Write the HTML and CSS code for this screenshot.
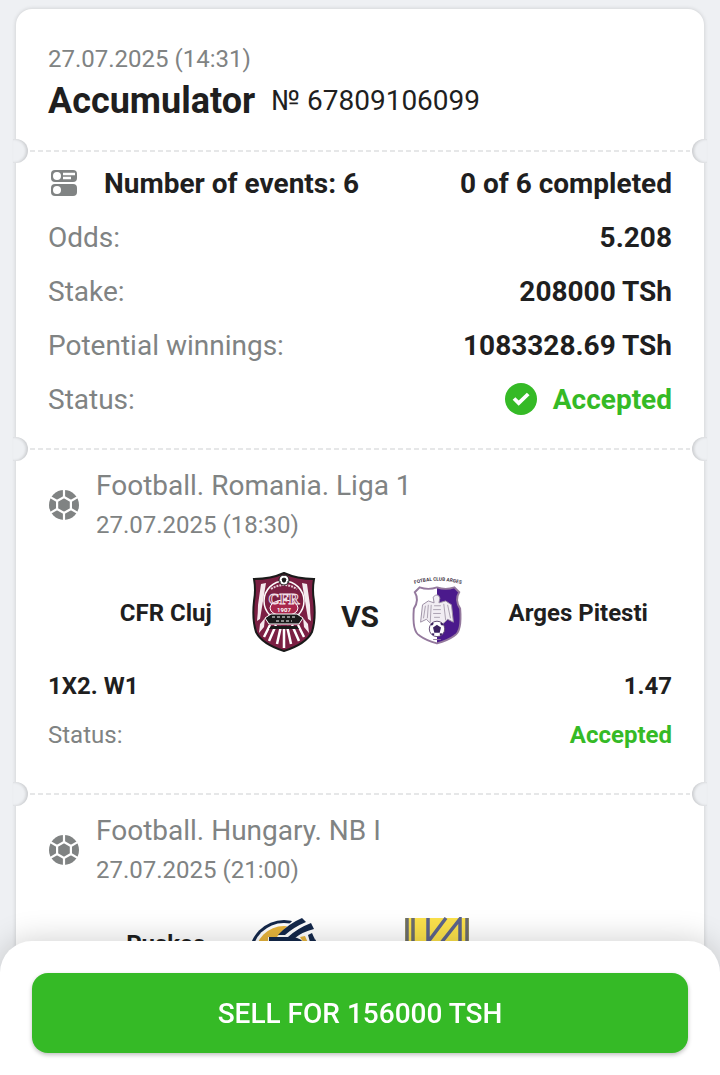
FILE: index.html
```html
<!DOCTYPE html>
<html lang="en">
<head>
    <meta charset="UTF-8">
    <meta name="viewport" content="width=device-width, initial-scale=1.0">
    <title>Accumulator № 67809106099</title>
    <link rel="stylesheet" href="styles.css">
</head>
<body>
    <!-- shared icons -->
    <svg class="sprite" aria-hidden="true">
        <symbol id="ball" viewBox="0 0 32 32">
            <circle cx="16" cy="16" r="15" fill="#808383"/>
            <g stroke="#fff" stroke-width="2.200" fill="none">
                <path d="M16 8V0M16 24v8M22.900 12l8-4.600M22.900 20l8 4.600M9.100 12l-8-4.600M9.100 20l-8 4.600"/>
                <path d="M16 8l6.900 4v8L16 24l-6.900-4v-8z"/>
            </g>
        </symbol>
    </svg>

    <main class="ticket">
        <header class="section ticket-header">
            <time class="date">27.07.2025 (14:31)</time>
            <div class="title-row">
                <h1>Accumulator</h1>
                <span class="number">№ 67809106099</span>
            </div>
        </header>

        <section class="section summary">
            <div class="row strong">
                <svg class="icon" viewBox="0 0 32 32" aria-hidden="true">
                    <rect x="3" y="3" width="26" height="12" rx="4" fill="#808383"/>
                    <rect x="3" y="17" width="26" height="12" rx="4" fill="#808383"/>
                    <circle cx="9" cy="9" r="4" fill="#fff"/>
                    <circle cx="9" cy="23" r="4" fill="#fff"/>
                    <path d="M15 7h12M15 11h8" stroke="#fff" stroke-width="2.400"/>
                </svg>
                <span class="events">Number of events: 6</span>
                <span class="value">0 of 6 completed</span>
            </div>
            <div class="row">
                <span>Odds:</span>
                <span class="value">5.208</span>
            </div>
            <div class="row">
                <span>Stake:</span>
                <span class="value">208000 TSh</span>
            </div>
            <div class="row">
                <span>Potential winnings:</span>
                <span class="value">1083328.69 TSh</span>
            </div>
            <div class="row">
                <span>Status:</span>
                <span class="value accepted">
                    <svg class="check" viewBox="0 0 32 32" aria-hidden="true">
                        <circle cx="16" cy="16" r="16" fill="#35ba26"/>
                        <path d="M9 15.500l4.700 4.700 9.500-9.200" fill="none" stroke="#fff" stroke-width="3.800"/>
                    </svg>
                    Accepted
                </span>
            </div>
        </section>

        <section class="section event">
            <div class="event-head">
                <svg class="icon" aria-hidden="true"><use href="#ball"/></svg>
                <div>
                    <h2>Football. Romania. Liga 1</h2>
                    <time class="date">27.07.2025 (18:30)</time>
                </div>
            </div>
            <div class="teams">
                <span class="team home">CFR Cluj</span>
                <svg class="crest" viewBox="0 0 64 82" aria-hidden="true">
                    <path d="M2 7Q19 7 32 1q13 6 30 6-2 11 0 22 2 18-2 31-6 12-28 19Q10 72 4 60 0 47 2 29 4 18 2 7z" fill="#7b1f43" stroke="#1a1a1a" stroke-width="2"/>
                    <path d="M9 12l5-1-4 24-2 12-3 2q1-9 1-16zM55 12l-5-1 4 24 2 12 3 2q-1-9-1-16zM8 52l5-6-1 9-5 6zM56 52l-5-6 1 9 5 6z" fill="#f5e9ee"/>
                    <path d="M18 53l-6 12M24 53l-7 16M29 54l-4 18M32 54v22M35 54l4 18M40 53l7 16M46 53l6 12" stroke="#fff" stroke-width="2.500"/>
                    <circle cx="32" cy="29" r="20" fill="#7b1f43" stroke="#fff" stroke-width="1.500"/>
                    <path d="M19 17q13-8 26 0" fill="none" stroke="#e9cdd8" stroke-width="2" stroke-dasharray="2 1"/>
                    <ellipse cx="32" cy="36" rx="14" ry="8" fill="#a8274c" stroke="#fff"/>
                    <text x="32" y="32" class="crest-cfr">CFR</text>
                    <text x="32" y="40" class="crest-year">1907</text>
                    <path d="M13 46l6-4h26l6 4-4 6H17z" fill="#1a1a1a" stroke="#fff"/>
                    <path d="M20 45h24M24 49h16" stroke="#fff" stroke-dasharray="3 2"/>
                    <path d="M19 54h26l2 3H17z" fill="#1a1a1a"/>
                    <circle cx="32" cy="8" r="5" fill="#fff" stroke="#1a1a1a"/>
                    <path d="M32 6l2 1-1 3h-2l-1-3zM28 10h1M35 10h1M32 3v1" fill="#1a1a1a" stroke="#1a1a1a"/>
                </svg>
                <span class="vs">VS</span>
                <svg class="crest" viewBox="-1 3 66 85" aria-hidden="true">
                    <path id="arc" d="M7 16Q32 8 59 16" fill="none"/>
                    <text class="crest-arc"><textPath href="#arc" startOffset="50%">FOTBAL CLUB ARGES</textPath></text>
                    <path d="M14 19q9 3 18 0 9 3 18 0l5 5q-5 8 1 17 2 24-6 28-7 5-18 8-11-3-18-8-8-4-6-28 6-9 1-17z" fill="#fff"/>
                    <path d="M32 19q9 3 18 0l5 5q-5 8 1 17 2 24-6 28-7 5-18 8z" fill="#4b1a8c"/>
                    <path d="M14 19q9 3 18 0 9 3 18 0l5 5q-5 8 1 17 2 24-6 28-7 5-18 8-11-3-18-8-8-4-6-28 6-9 1-17z" fill="none" stroke="#94799d" stroke-width="2"/>
                    <path d="M28 29q5-5 7 1l-1 5 7-2 6 4 2 18-6-3-4 4-4 1h-6l-4-1-4-4-6 3 2-18 6-4 6 2z" fill="#f1edf3" stroke="#9b8fa3"/>
                    <path d="M20 38l-2 13M23 37l-1 14M26 37l-1 18M39 36l2 17M43 37l3 14M29 38h7M28 42h8M28 46h8M29 50h6" fill="none" stroke="#aaa0b0"/>
                    <circle cx="32" cy="62" r="8" fill="#fff" stroke="#604a72"/>
                    <path d="M32 59l3 2-1 4h-4l-1-4zM26 58l2-2M36 56l2 2M27 67l2 1M35 68l2-1" fill="#3c2360" stroke="#3c2360" stroke-width="2"/>
                    <path d="M28 73h8" stroke="#94799d"/>
                </svg>
                <span class="team">Arges Pitesti</span>
            </div>
            <div class="row small strong">
                <span>1X2. W1</span>
                <span class="value">1.47</span>
            </div>
            <div class="row small">
                <span>Status:</span>
                <span class="value accepted">Accepted</span>
            </div>
        </section>

        <section class="section event">
            <div class="event-head">
                <svg class="icon" aria-hidden="true"><use href="#ball"/></svg>
                <div>
                    <h2>Football. Hungary. NB I</h2>
                    <time class="date">27.07.2025 (21:00)</time>
                </div>
            </div>
            <div class="teams">
                <span class="team home">Puskas Academy</span>
                <svg class="crest" viewBox="0 0 64 82" aria-hidden="true">
                    <circle cx="32" cy="38" r="35" fill="#14284b"/>
                    <circle cx="32" cy="38" r="32" fill="#fff"/>
                    <circle cx="32" cy="38" r="29" fill="#e8b53c"/>
                    <path d="M24 21L42 2l20 10 2 24H16V20z" fill="#fff"/>
                    <path d="M26 18Q36 7 50 1l4 4Q42 10 33 18zM36 20Q46 11 59 6l3 6q-12 3-19 9zM56 18l4-2 4 9h-6zM17 20h24q9 1 12 8H17z" fill="#14284b"/>
                    <path d="M48 20l5-1 4 9h-4z" fill="#e8b53c"/>
                </svg>
                <span></span>
                <svg class="crest" viewBox="0 0 64 82" aria-hidden="true">
                    <path d="M0 1h64v80H0z" fill="#fbe14b"/>
                    <path d="M2 1v80M8 1v80M62 1v80" stroke="#6b6d70" stroke-width="3.500"/>
                    <path d="M23 1v24L41 1M36 26L55 2v24" fill="none" stroke="#5c648c" stroke-width="3.500"/>
                </svg>
            </div>
        </section>
    </main>

    <footer class="sell-bar">
        <button type="button">SELL FOR 156000 TSH</button>
    </footer>
</body>
</html>
```

FILE: styles.css
```css
* {
    box-sizing: border-box;
}
body {
    margin: 0;
    padding: 9px 16px 0;
    height: 100vh;
    overflow: hidden;
    background-color: #eef0f3;
    color: #1f1f1f;
    font-family: Roboto, "Noto Sans", sans-serif;
}
h1, h2 {
    margin: 0;
}
.sprite {
    position: absolute;
    width: 0;
    height: 0;
}
.ticket {
    background-color: white;
    border-radius: 16px;
    box-shadow: 0 0 4px rgba(0,0,0,0.16);
}
.section {
    position: relative;
    padding: 0 32px;
}
/* perforation between the sections */
.section + .section {
    border-top: 2px solid transparent;
    background: repeating-linear-gradient(to right, #e6e7e8 0 5px, transparent 5px 8px) 14px 0 / calc(100% - 28px) 2px no-repeat border-box;
}
.section + .section::before,
.section + .section::after {
    content: "";
    position: absolute;
    top: -13px;
    width: 15px;
    height: 24px;
    background-color: #eef0f3;
}
.section + .section::before {
    left: -3px;
    border-radius: 0 12px 12px 0;
    box-shadow: inset -2px 0 3px rgba(0,0,0,0.14);
}
.section + .section::after {
    right: -3px;
    border-radius: 12px 0 0 12px;
    box-shadow: inset 2px 0 3px rgba(0,0,0,0.14);
}
.date {
    display: block;
    font-size: 24px;
    line-height: 32px;
    color: #808383;
}
.ticket-header {
    padding-top: 34px;
    padding-bottom: 23px;
}
.title-row {
    display: flex;
    align-items: center;
    gap: 16px;
    line-height: 52px;
}
h1 {
    font-size: 36px;
}
.number {
    font-size: 28px;
}
.icon {
    flex: none;
    width: 32px;
    height: 32px;
}
.summary {
    padding-top: 4px;
    padding-bottom: 22px;
}
.row {
    display: flex;
    justify-content: space-between;
    align-items: center;
    height: 54px;
    font-size: 28px;
    color: #808383;
}
.strong {
    font-weight: bold;
    color: #1f1f1f;
}
.events {
    flex: 1;
    margin-left: 24px;
}
.value {
    font-weight: bold;
    color: #1f1f1f;
}
.accepted {
    display: flex;
    align-items: center;
    gap: 16px;
    color: #35ba26;
}
.check {
    width: 32px;
    height: 32px;
}
.event {
    padding-top: 16px;
    padding-bottom: 34px;
}
.event-head {
    display: flex;
    align-items: center;
    gap: 16px;
    margin-bottom: 28px;
}
.event-head .date {
    line-height: 38px;
}
h2 {
    font-size: 28px;
    font-weight: normal;
    line-height: 40px;
    color: #808383;
}
.teams {
    display: grid;
    grid-template-columns: 1fr 64px 57px 64px 1fr;
    align-items: center;
    gap: 16px;
    margin-bottom: 7px;
}
.team {
    text-align: center;
    font-size: 24px;
    font-weight: bold;
    line-height: 28px;
}
.home {
    padding-left: 48px;
}
.crest {
    width: 64px;
    height: 82px;
}
.vs {
    padding-top: 6px;
    text-align: center;
    font-size: 30px;
    font-weight: bold;
}
.crest text {
    text-anchor: middle;
    font-weight: bold;
}
.crest-cfr {
    font-family: "Liberation Serif", serif;
    font-size: 15px;
    fill: #7b1f43;
    stroke: #f2dfe6;
}
.crest-year {
    font-size: 6px;
    fill: white;
}
.crest-arc {
    font-size: 5px;
    fill: #3a3142;
}
.small {
    height: 49px;
    font-size: 24px;
}
.sell-bar {
    position: fixed;
    left: 0;
    right: 0;
    bottom: 0;
    padding: 32px 32px 22px;
    background-color: white;
    border-radius: 32px 32px 0 0;
    box-shadow: 0 0 32px rgba(0,0,0,0.2);
}
button {
    display: block;
    width: 100%;
    height: 80px;
    border: none;
    border-radius: 16px;
    background-color: #35ba26;
    box-shadow: 0 2px 4px rgba(0,0,0,0.25);
    color: white;
    font-family: inherit;
    font-size: 28px;
    font-weight: 500;
    cursor: pointer;
}
```
